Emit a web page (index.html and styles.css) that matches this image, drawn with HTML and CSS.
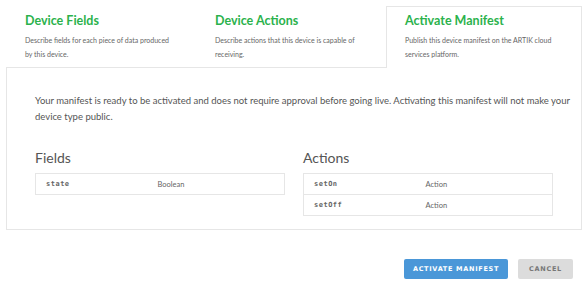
FILE: index.html
```html
<!DOCTYPE html>
<html lang="en">
<head>
<meta charset="utf-8"/>
<title>Activate Manifest</title>
<link rel="stylesheet" href="styles.css">
</head>
<body>
<div class="page">
  <div class="tabs">
    <div class="tab">
      <h3>Device Fields</h3>
      <p>Describe fields for each piece of data produced by this device.</p>
    </div>
    <div class="tab">
      <h3>Device Actions</h3>
      <p>Describe actions that this device is capable of receiving.</p>
    </div>
    <div class="tab active">
      <h3>Activate Manifest</h3>
      <p>Publish this device manifest on the ARTIK cloud services platform.</p>
    </div>
  </div>

  <div class="panel">
    <p class="intro">Your manifest is ready to be activated and does not require approval before going live. Activating this manifest will not make your device type public.</p>
    <div class="columns">
      <div class="col">
        <h4>Fields</h4>
        <table class="list">
          <tr><td class="name">state</td><td>Boolean</td></tr>
        </table>
      </div>
      <div class="col">
        <h4>Actions</h4>
        <table class="list">
          <tr><td class="name">setOn</td><td>Action</td></tr>
          <tr><td class="name">setOff</td><td>Action</td></tr>
        </table>
      </div>
    </div>
  </div>

  <div class="buttons">
    <button class="btn primary">ACTIVATE MANIFEST</button>
    <button class="btn">CANCEL</button>
  </div>
</div>
</body>
</html>
```

FILE: styles.css
```css
body {
  margin: 0;
  font-family: Lato, sans-serif;
  background: white;
  color: #555;
}
.page {
  padding: 6px 5px 0 6px;
}
.tabs {
  display: grid;
  grid-template-columns: 190px 190px 1fr;
}
.tab {
  height: 61px;
  box-sizing: border-box;
  padding: 4px 18px 0 18px;
  border: 1px solid transparent;
  border-bottom: none;
}
.tab.active {
  border-color: #e6e6e6;
  background: white;
  margin-bottom: -1px;
  height: 62px;
  position: relative;
}
.tab h3 {
  margin: 0;
  font-size: 12.5px;
  font-weight: bold;
  color: #2bb24c;
  line-height: 20px;
}
.tab p {
  margin: 2px 0 0 0;
  font-size: 7px;
  line-height: 14px;
  color: #666;
}
.panel {
  border: 1px solid #e6e6e6;
  padding: 25px 6px 13px 28px;
}
.intro {
  margin: 0;
  font-size: 9.5px;
  line-height: 16px;
  color: #555;
}
.columns {
  display: grid;
  grid-template-columns: 1fr 1fr;
  gap: 18px;
  margin-top: 24px;
  padding-right: 22px;
}
.col h4 {
  margin: 0 0 6px 0;
  font-size: 14px;
  font-weight: 400;
  line-height: 18px;
  color: #555;
}
.list {
  width: 100%;
  border-collapse: collapse;
  border: 1px solid #e6e6e6;
}
.list td {
  border-top: 1px solid #e6e6e6;
  height: 20px;
  padding: 0 10px;
  font-size: 7.5px;
  color: #666;
}
.list td.name {
  font-family: 'DejaVu Sans Mono', monospace;
  font-weight: bold;
  font-size: 7px;
  letter-spacing: 0.5px;
  width: 45%;
  box-sizing: border-box;
}
.buttons {
  display: flex;
  justify-content: flex-end;
  gap: 10px;
  margin-top: 29px;
  padding-right: 9px;
}
.btn {
  border: none;
  border-radius: 2px;
  height: 20px;
  padding: 0;
  font-family: 'DejaVu Sans', sans-serif;
  font-size: 6.5px;
  font-weight: bold;
  letter-spacing: 0.7px;
  white-space: nowrap;
  background: #dcdcdc;
  color: #777;
  width: 55px;
}
.btn.primary {
  background: #4a97d8;
  color: white;
  width: 104px;
}
```
